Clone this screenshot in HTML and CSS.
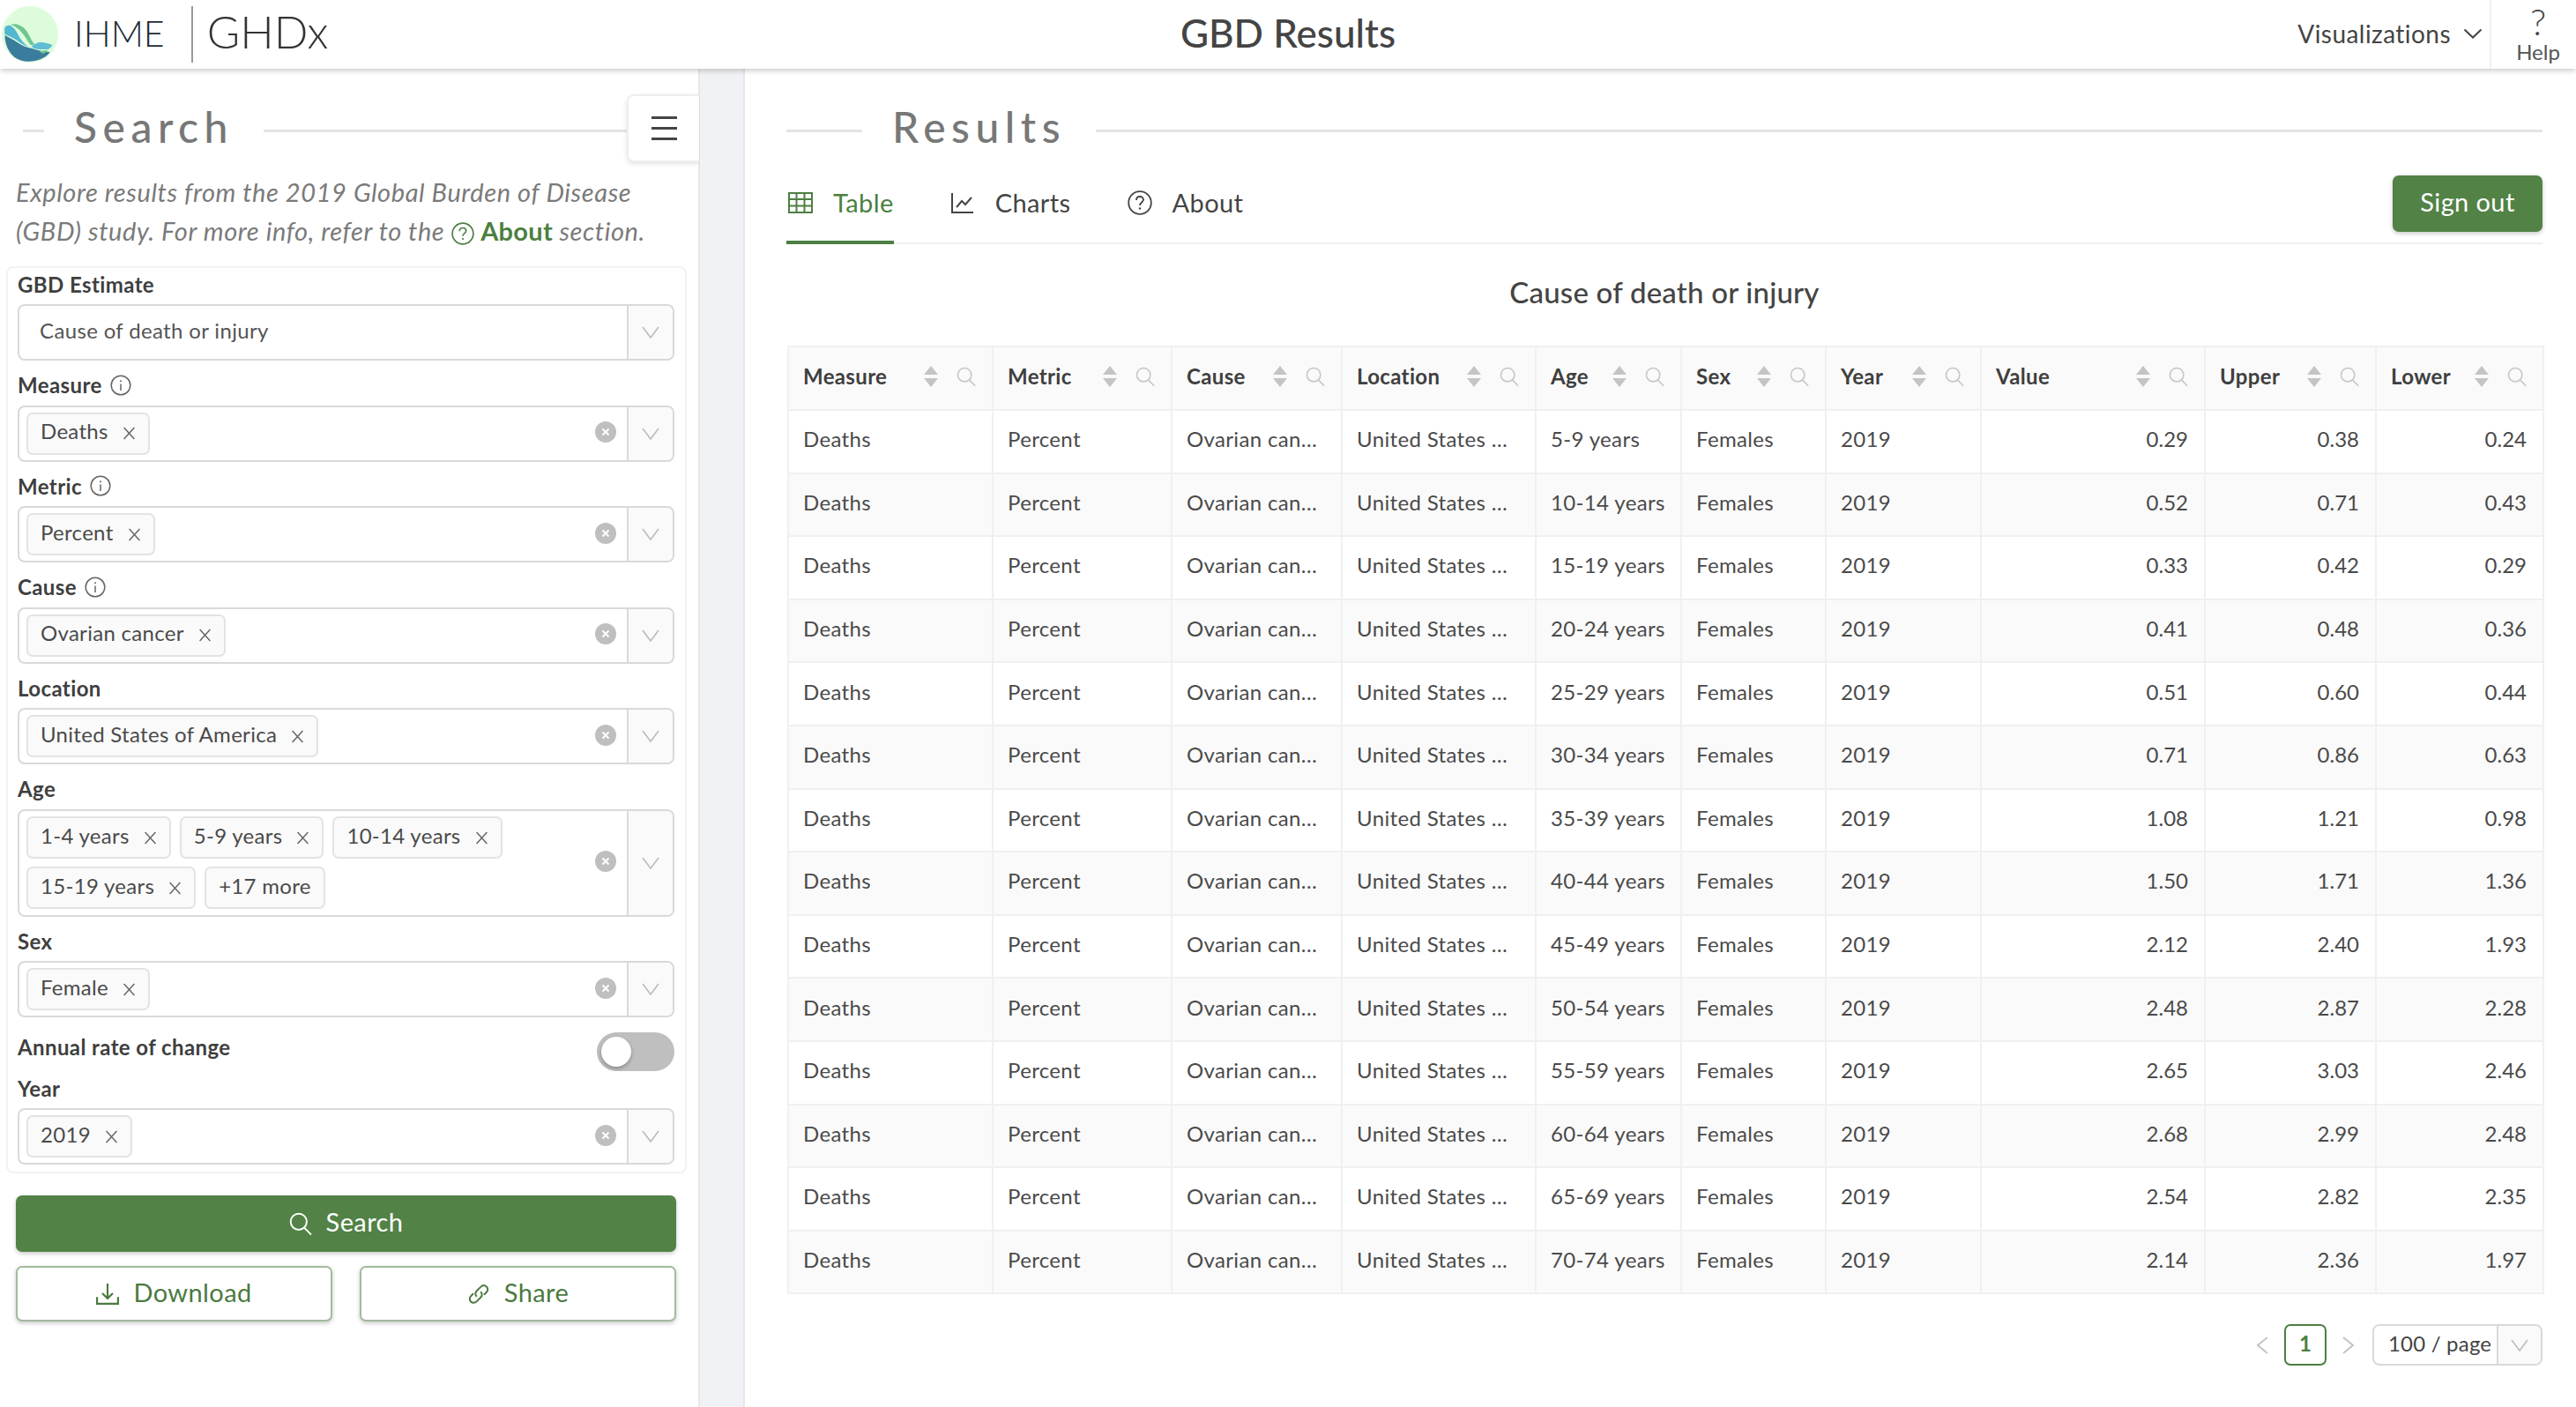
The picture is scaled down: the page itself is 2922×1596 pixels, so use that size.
FILE: index.html
```html
<!DOCTYPE html>
<html lang="en">
<head>
    <meta charset="UTF-8">
    <title>GBD Results</title>
    <link rel="stylesheet" href="styles.css">
</head>
<body>
    <svg class="sprites" width="0" height="0">
        <symbol id="i-chevron" viewBox="0 0 20 14"><path d="M1 1l9 12 9-12" fill="none" stroke="currentColor" stroke-width="1.6"/></symbol>
        <symbol id="i-x" viewBox="0 0 14 14"><path d="M1.500 1l11 12M12.500 1l-11 12" fill="none" stroke="currentColor" stroke-width="1.400"/></symbol>
        <symbol id="i-clear" viewBox="0 0 24 24"><circle cx="12" cy="12" r="12" fill="#bfbfbf"/><path d="M8.500 8.500l7 7M15.500 8.500l-7 7" fill="none" stroke="#fff" stroke-width="2"/></symbol>
        <symbol id="i-info" viewBox="0 0 24 24"><circle cx="12" cy="12" r="10.800" fill="none" stroke="currentColor" stroke-width="1.500"/><path d="M12 10.500v7.500" stroke="currentColor" stroke-width="1.500"/><circle cx="12" cy="7.300" r="1" fill="currentColor"/></symbol>
        <symbol id="i-help" viewBox="0 0 28 28"><circle cx="14" cy="14" r="12.800" fill="none" stroke="currentColor" stroke-width="1.800"/><path d="M10 11c0-2.500 1.800-4 4-4s4 1.500 4 3.600c0 2.900-4 3-4 6.400" fill="none" stroke="currentColor" stroke-width="1.800"/><circle cx="14" cy="20.500" r="1.200" fill="currentColor"/></symbol>
        <symbol id="i-search" viewBox="0 0 24 24"><circle cx="10" cy="10" r="8.400" fill="none" stroke="currentColor" stroke-width="1.800"/><path d="M16 16.500l7 7" fill="none" stroke="currentColor" stroke-width="1.800"/></symbol>
        <symbol id="i-sort" viewBox="0 0 16 24"><path d="M8 0l8 10H0zM0 14h16l-8 10z" fill="currentColor"/></symbol>
    </svg>

    <header class="topbar">
        <div class="brand">
            <svg class="logo" viewBox="2.500 6 64 64">
                <circle cx="34.500" cy="38" r="32" fill="#dcfcdc"/>
                <path d="M6 39c4 2 10 5 14 8 6 4 11 6 17 7 6 2 14 4 20 4-2 4-7 7-13 9-10 3-20 2-27-3-7-6-11-15-11-25z" fill="#3a7c9b"/>
                <path d="M6 30c2-2 4-2.500 6-2 5 2 8 8 11 14 3 4 6 8 10 10-5-1-9-4-13-7-4-3-9-5-14-7-.5-3-.5-5 0-8z" fill="#55b6d0"/>
                <path d="M12 27c5-1 8-1 11 1 5 2 8 6 10 10 2 4 4 8 7 12h-5c-3-4-5-8-8-12-4-5-8-9-15-11z" fill="#6fc78e"/>
                <path d="M36 52c3-3 6-4 9-5 5-.5 11 1 15 3-1 2-3 4-5 5h-10c-3 0-6-1-9-3z" fill="#60bdd4"/>
                <path d="M45 57l9-1 1 1-6 3z" fill="#6fc78e"/>
            </svg>
            <span class="brand-ihme">IHME</span>
            <span class="brand-ghdx">GHDx</span>
        </div>
        <div class="app-title">GBD Results</div>
        <nav class="topnav">
            <span class="viz-menu">Visualizations <svg class="viz-chevron" viewBox="0 0 22 12"><path d="M1.500 1.500L11 10.500l9.500-9" fill="none" stroke="currentColor" stroke-width="2"/></svg></span>
            <div class="help"><span class="help-mark">?</span><span class="help-text">Help</span></div>
        </nav>
    </header>

    <div class="page">
        <aside class="sidebar">
            <div class="panel-head sidebar-head">
                <span class="rule rule-short"></span>
                <h2>Search</h2>
                <span class="rule"></span>
                <button class="menu-btn"><span></span><span></span><span></span></button>
            </div>
            <p class="intro">
                <span class="intro-line">Explore results from the 2019 Global Burden of Disease</span>
                <span class="intro-line">(GBD) study. For more info, refer to the <svg class="intro-icon"><use href="#i-help"/></svg> <a>About</a> section.</span>
            </p>

            <div class="filters">
                <label class="field-label">GBD Estimate</label>
                <div class="select"><div class="select-value"><span class="plain-value">Cause of death or injury</span></div><div class="select-arrow"><svg><use href="#i-chevron"/></svg></div></div>

                <label class="field-label">Measure <svg class="info"><use href="#i-info"/></svg></label>
                <div class="select"><div class="select-value"><span class="tag">Deaths<svg><use href="#i-x"/></svg></span></div><svg class="clear"><use href="#i-clear"/></svg><div class="select-arrow"><svg><use href="#i-chevron"/></svg></div></div>

                <label class="field-label">Metric <svg class="info"><use href="#i-info"/></svg></label>
                <div class="select"><div class="select-value"><span class="tag">Percent<svg><use href="#i-x"/></svg></span></div><svg class="clear"><use href="#i-clear"/></svg><div class="select-arrow"><svg><use href="#i-chevron"/></svg></div></div>

                <label class="field-label">Cause <svg class="info"><use href="#i-info"/></svg></label>
                <div class="select"><div class="select-value"><span class="tag">Ovarian cancer<svg><use href="#i-x"/></svg></span></div><svg class="clear"><use href="#i-clear"/></svg><div class="select-arrow"><svg><use href="#i-chevron"/></svg></div></div>

                <label class="field-label">Location</label>
                <div class="select"><div class="select-value"><span class="tag">United States of America<svg><use href="#i-x"/></svg></span></div><svg class="clear"><use href="#i-clear"/></svg><div class="select-arrow"><svg><use href="#i-chevron"/></svg></div></div>

                <label class="field-label">Age</label>
                <div class="select select-tall"><div class="select-value"><span class="tag">1-4 years<svg><use href="#i-x"/></svg></span><span class="tag">5-9 years<svg><use href="#i-x"/></svg></span><span class="tag">10-14 years<svg><use href="#i-x"/></svg></span><span class="tag">15-19 years<svg><use href="#i-x"/></svg></span><span class="tag">+17 more</span></div><svg class="clear"><use href="#i-clear"/></svg><div class="select-arrow"><svg><use href="#i-chevron"/></svg></div></div>

                <label class="field-label">Sex</label>
                <div class="select"><div class="select-value"><span class="tag">Female<svg><use href="#i-x"/></svg></span></div><svg class="clear"><use href="#i-clear"/></svg><div class="select-arrow"><svg><use href="#i-chevron"/></svg></div></div>

                <div class="switch-row">
                    <label class="field-label">Annual rate of change</label>
                    <span class="switch"><span class="switch-knob"></span></span>
                </div>

                <label class="field-label">Year</label>
                <div class="select select-last"><div class="select-value"><span class="tag">2019<svg><use href="#i-x"/></svg></span></div><svg class="clear"><use href="#i-clear"/></svg><div class="select-arrow"><svg><use href="#i-chevron"/></svg></div></div>
            </div>

            <button class="btn btn-primary btn-search"><svg class="btn-icon"><use href="#i-search"/></svg><span>Search</span></button>
            <div class="btn-row">
                <button class="btn btn-outline"><svg class="btn-icon" viewBox="0 0 24 24"><path d="M12 1v15M6.500 11l5.500 5.500 5.500-5.500M1 15v7h22v-7" fill="none" stroke="currentColor" stroke-width="2"/></svg><span>Download</span></button>
                <button class="btn btn-outline"><svg class="btn-icon" viewBox="0 0 24 24"><path d="M10 14.500c-2-2-1.800-4.200 0-6l4-4c2-2 4.500-2 6.200-.3 1.800 1.800 1.600 4.300-.2 6l-2.500 2.500M14 9.500c2 2 1.800 4.200 0 6l-4 4c-2 2-4.500 2-6.200.3-1.800-1.800-1.600-4.300.2-6l2.500-2.500" fill="none" stroke="currentColor" stroke-width="1.800"/></svg><span>Share</span></button>
            </div>
        </aside>

        <div class="gutter"></div>

        <main class="results">
            <div class="panel-head">
                <span class="rule rule-mid"></span>
                <h2>Results</h2>
                <span class="rule"></span>
            </div>

            <div class="tabs">
                <a class="tab tab-active"><svg class="tab-icon" viewBox="0 0 28 28"><path d="M1 3h26v22H1zM1 10h26M1 17.500h26M9.500 3v22M18.500 3v22" fill="none" stroke="currentColor" stroke-width="2"/></svg>Table</a>
                <a class="tab"><svg class="tab-icon" viewBox="0 0 28 28"><path d="M2 3v22h24M7 19l6-7 4 4 7-8" fill="none" stroke="currentColor" stroke-width="2"/></svg>Charts</a>
                <a class="tab"><svg class="tab-icon"><use href="#i-help"/></svg>About</a>
                <button class="btn btn-primary btn-signout"><span>Sign out</span></button>
            </div>

            <h3 class="table-title">Cause of death or injury</h3>

            <table class="data-table">
                <colgroup>
                    <col class="c-measure"><col class="c-metric"><col class="c-cause"><col class="c-location"><col class="c-age"><col class="c-sex"><col class="c-year"><col class="c-value"><col class="c-upper"><col class="c-lower">
                </colgroup>
                <thead>
                    <tr>
                        <th><div class="th-in"><span>Measure</span><svg class="sort"><use href="#i-sort"/></svg><svg class="th-search"><use href="#i-search"/></svg></div></th>
                        <th><div class="th-in"><span>Metric</span><svg class="sort"><use href="#i-sort"/></svg><svg class="th-search"><use href="#i-search"/></svg></div></th>
                        <th><div class="th-in"><span>Cause</span><svg class="sort"><use href="#i-sort"/></svg><svg class="th-search"><use href="#i-search"/></svg></div></th>
                        <th><div class="th-in"><span>Location</span><svg class="sort"><use href="#i-sort"/></svg><svg class="th-search"><use href="#i-search"/></svg></div></th>
                        <th><div class="th-in"><span>Age</span><svg class="sort"><use href="#i-sort"/></svg><svg class="th-search"><use href="#i-search"/></svg></div></th>
                        <th><div class="th-in"><span>Sex</span><svg class="sort"><use href="#i-sort"/></svg><svg class="th-search"><use href="#i-search"/></svg></div></th>
                        <th><div class="th-in"><span>Year</span><svg class="sort"><use href="#i-sort"/></svg><svg class="th-search"><use href="#i-search"/></svg></div></th>
                        <th><div class="th-in"><span>Value</span><svg class="sort"><use href="#i-sort"/></svg><svg class="th-search"><use href="#i-search"/></svg></div></th>
                        <th><div class="th-in"><span>Upper</span><svg class="sort"><use href="#i-sort"/></svg><svg class="th-search"><use href="#i-search"/></svg></div></th>
                        <th><div class="th-in"><span>Lower</span><svg class="sort"><use href="#i-sort"/></svg><svg class="th-search"><use href="#i-search"/></svg></div></th>
                    </tr>
                </thead>
                <tbody>
                    <tr><td>Deaths</td><td>Percent</td><td>Ovarian can…</td><td>United States …</td><td>5-9 years</td><td>Females</td><td>2019</td><td class="num">0.29</td><td class="num">0.38</td><td class="num">0.24</td></tr>
                    <tr><td>Deaths</td><td>Percent</td><td>Ovarian can…</td><td>United States …</td><td>10-14 years</td><td>Females</td><td>2019</td><td class="num">0.52</td><td class="num">0.71</td><td class="num">0.43</td></tr>
                    <tr><td>Deaths</td><td>Percent</td><td>Ovarian can…</td><td>United States …</td><td>15-19 years</td><td>Females</td><td>2019</td><td class="num">0.33</td><td class="num">0.42</td><td class="num">0.29</td></tr>
                    <tr><td>Deaths</td><td>Percent</td><td>Ovarian can…</td><td>United States …</td><td>20-24 years</td><td>Females</td><td>2019</td><td class="num">0.41</td><td class="num">0.48</td><td class="num">0.36</td></tr>
                    <tr><td>Deaths</td><td>Percent</td><td>Ovarian can…</td><td>United States …</td><td>25-29 years</td><td>Females</td><td>2019</td><td class="num">0.51</td><td class="num">0.60</td><td class="num">0.44</td></tr>
                    <tr><td>Deaths</td><td>Percent</td><td>Ovarian can…</td><td>United States …</td><td>30-34 years</td><td>Females</td><td>2019</td><td class="num">0.71</td><td class="num">0.86</td><td class="num">0.63</td></tr>
                    <tr><td>Deaths</td><td>Percent</td><td>Ovarian can…</td><td>United States …</td><td>35-39 years</td><td>Females</td><td>2019</td><td class="num">1.08</td><td class="num">1.21</td><td class="num">0.98</td></tr>
                    <tr><td>Deaths</td><td>Percent</td><td>Ovarian can…</td><td>United States …</td><td>40-44 years</td><td>Females</td><td>2019</td><td class="num">1.50</td><td class="num">1.71</td><td class="num">1.36</td></tr>
                    <tr><td>Deaths</td><td>Percent</td><td>Ovarian can…</td><td>United States …</td><td>45-49 years</td><td>Females</td><td>2019</td><td class="num">2.12</td><td class="num">2.40</td><td class="num">1.93</td></tr>
                    <tr><td>Deaths</td><td>Percent</td><td>Ovarian can…</td><td>United States …</td><td>50-54 years</td><td>Females</td><td>2019</td><td class="num">2.48</td><td class="num">2.87</td><td class="num">2.28</td></tr>
                    <tr><td>Deaths</td><td>Percent</td><td>Ovarian can…</td><td>United States …</td><td>55-59 years</td><td>Females</td><td>2019</td><td class="num">2.65</td><td class="num">3.03</td><td class="num">2.46</td></tr>
                    <tr><td>Deaths</td><td>Percent</td><td>Ovarian can…</td><td>United States …</td><td>60-64 years</td><td>Females</td><td>2019</td><td class="num">2.68</td><td class="num">2.99</td><td class="num">2.48</td></tr>
                    <tr><td>Deaths</td><td>Percent</td><td>Ovarian can…</td><td>United States …</td><td>65-69 years</td><td>Females</td><td>2019</td><td class="num">2.54</td><td class="num">2.82</td><td class="num">2.35</td></tr>
                    <tr><td>Deaths</td><td>Percent</td><td>Ovarian can…</td><td>United States …</td><td>70-74 years</td><td>Females</td><td>2019</td><td class="num">2.14</td><td class="num">2.36</td><td class="num">1.97</td></tr>
                </tbody>
            </table>

            <div class="pager">
                <svg class="pager-arrow" viewBox="0 0 14 20"><path d="M13 1L2 10l11 9" fill="none" stroke="currentColor" stroke-width="2"/></svg>
                <span class="pager-current">1</span>
                <svg class="pager-arrow" viewBox="0 0 14 20"><path d="M1 1l11 9-11 9" fill="none" stroke="currentColor" stroke-width="2"/></svg>
                <div class="page-size"><span class="page-size-text">100 / page</span><div class="select-arrow"><svg><use href="#i-chevron"/></svg></div></div>
            </div>
        </main>
    </div>
</body>
</html>
```

FILE: styles.css
```css
* {
    margin: 0;
    padding: 0;
    box-sizing: border-box;
}

html, body {
    height: 100%;
}

body {
    font-family: "Lato", "Open Sans", sans-serif;
    font-size: 24px;
    color: #444;
    background: #fff;
    overflow: hidden;
}

.sprites {
    position: absolute;
}

button {
    font-family: inherit;
    cursor: pointer;
}

/* top bar */
.topbar {
    position: relative;
    z-index: 2;
    height: 78px;
    display: grid;
    grid-template-columns: 1fr auto 1fr;
    align-items: center;
    background: #fff;
    box-shadow: 0 2px 6px rgba(0, 0, 0, 0.22);
}

.brand {
    display: flex;
    align-items: center;
    height: 78px;
    padding-left: 2px;
}

.logo {
    width: 64px;
    height: 64px;
}

.brand-ihme {
    margin-left: 18px;
    padding-bottom: 3px;
    font-size: 41px;
    font-weight: 300;
    color: #1d2b33;
}

.brand-ghdx {
    margin-left: 30px;
    padding-left: 16px;
    border-left: 2px solid #999;
    height: 64px;
    line-height: 58px;
    font-size: 51px;
    font-weight: 300;
    color: #333;
}

.app-title {
    padding-bottom: 4px;
    font-size: 44px;
    font-weight: 500;
    color: #444;
}

.topnav {
    display: flex;
    justify-content: flex-end;
    align-items: center;
    height: 78px;
}

.viz-menu {
    display: flex;
    align-items: center;
    gap: 14px;
    padding-bottom: 3px;
    font-size: 28px;
    letter-spacing: 0.45px;
    color: #444;
    margin-right: 8px;
}

.viz-chevron {
    width: 22px;
    height: 12px;
}

.help {
    width: 98px;
    height: 78px;
    padding-left: 10px;
    border-left: 2px solid #f0f0f0;
    display: flex;
    flex-direction: column;
    align-items: center;
    line-height: 1;
}

.help-mark {
    font-size: 42px;
    margin-top: 3px;
    font-weight: 300;
}

.help-text {
    font-size: 24px;
    margin-top: 2px;
    color: #555;
}

/* layout */
.page {
    display: flex;
    height: calc(100% - 78px);
}

.sidebar {
    width: 794px;
    flex: none;
    padding: 0 25px 0 18px;
    border-right: 2px solid #e8e8e8;
}

.gutter {
    width: 51px;
    flex: none;
    background: #f0f2f5;
    border-right: 2px solid #e8e8e8;
}

.results {
    flex: 1;
    min-width: 0;
    padding: 0 38px 0 47px;
}

.panel-head {
    display: flex;
    align-items: center;
    margin-top: 29px;
    height: 77px;
}

.panel-head h2 {
    padding-bottom: 4px;
    font-size: 48px;
    font-weight: 500;
    letter-spacing: 6.5px;
    color: #777;
    margin: 0 34px;
}

.rule {
    flex: 1;
    height: 3px;
    margin-top: 5px;
    background: #e4e4e4;
}

.rule-short {
    flex: none;
    width: 24px;
}

.rule-mid {
    flex: none;
    width: 86px;
}

.sidebar-head {
    margin-left: 8px;
    margin-right: -26px;
}

.menu-btn {
    flex: none;
    width: 82px;
    height: 77px;
    display: flex;
    flex-direction: column;
    justify-content: center;
    align-items: center;
    gap: 9px;
    background: #fff;
    border: 2px solid #eee;
    border-right: 0;
    border-radius: 8px 0 0 8px;
    box-shadow: 0 2px 5px rgba(0, 0, 0, 0.12);
}

.menu-btn span {
    width: 29px;
    height: 3px;
    background: #444;
}

.intro {
    margin-top: 12px;
    font-size: 29px;
    line-height: 44px;
    letter-spacing: 0.6px;
    font-style: italic;
    color: #7a7a7a;
}

.intro-line {
    display: block;
    white-space: nowrap;
}

.intro-icon {
    width: 26px;
    height: 26px;
    color: #4c7f41;
    vertical-align: -5px;
}

.intro a {
    font-style: normal;
    font-weight: 700;
    letter-spacing: 0.3px;
    color: #4c7f41;
}

/* filter card */
.filters {
    margin: 18px -12px 0 -11px;
    padding: 3px 12px 8px 11px;
    border: 2px solid #f2f2f2;
    border-radius: 8px;
}

.field-label {
    display: flex;
    align-items: center;
    gap: 9px;
    height: 38px;
    padding-bottom: 8px;
    font-weight: 700;
    letter-spacing: 0.4px;
    color: #3f3f3f;
}

.info {
    width: 24px;
    height: 24px;
    color: #666;
}

.select {
    display: flex;
    align-items: center;
    height: 64px;
    margin-bottom: 12.5px;
    background: #fff;
    border: 2px solid #d9d9d9;
    border-radius: 8px;
}

.select-tall {
    height: 122px;
}

.select-last {
    margin-bottom: 0;
}

.select-value {
    flex: 1;
    display: flex;
    flex-wrap: wrap;
    gap: 9px 10px;
    padding-left: 8px;
}

.plain-value {
    padding: 0 0 5px 15px;
    letter-spacing: 0.35px;
    color: #555;
}

.tag {
    display: inline-flex;
    align-items: center;
    gap: 16px;
    height: 48px;
    padding: 0 14px 6px;
    background: #fafafa;
    border: 2px solid #e3e3e3;
    border-radius: 7px;
    letter-spacing: 0.3px;
    color: #4a4a4a;
}

.tag svg {
    width: 15px;
    height: 15px;
    margin-top: 6px;
    color: #666;
}

.clear {
    flex: none;
    width: 24px;
    height: 24px;
    margin: 0 12px 3px 0;
}

.select-arrow {
    flex: none;
    width: 52px;
    align-self: stretch;
    display: flex;
    align-items: center;
    justify-content: center;
    background: #fafafa;
    border-left: 2px solid #d9d9d9;
    border-radius: 0 7px 7px 0;
    color: #bbb;
}

.select-arrow svg {
    width: 20px;
    height: 14px;
}

.switch-row {
    display: flex;
    align-items: center;
    justify-content: space-between;
    height: 44px;
    margin: 17px 0 4px;
}

.switch-row .field-label {
    padding-bottom: 12px;
}

.switch {
    width: 88px;
    height: 44px;
    padding: 5px;
    background: #bfbfbf;
    border-radius: 22px;
}

.switch-knob {
    display: block;
    width: 34px;
    height: 34px;
    background: #fff;
    border-radius: 50%;
    box-shadow: 0 2px 4px rgba(0, 0, 0, 0.3);
}

/* buttons */
.btn {
    display: flex;
    align-items: center;
    justify-content: center;
    gap: 16px;
    font-size: 29px;
    letter-spacing: 0.4px;
    border-radius: 7px;
    box-shadow: 0 2px 5px rgba(0, 0, 0, 0.22);
}

.btn span {
    padding-bottom: 5px;
}

.btn-icon {
    width: 26px;
    height: 26px;
}

.btn-primary {
    color: #fff;
    background: #528246;
    border: 0;
}

.btn-outline {
    flex: 1;
    height: 63px;
    color: #4b7a3f;
    background: #fff;
    border: 2px solid #a3bb9c;
}

.btn-search {
    width: 100%;
    height: 64px;
    margin-top: 25px;
}

.btn-row {
    display: flex;
    gap: 31px;
    margin-top: 16px;
}

/* tabs */
.tabs {
    display: flex;
    height: 78px;
    margin-top: 15px;
    border-bottom: 2px solid #f0f0f0;
}

.tab {
    display: flex;
    align-items: flex-start;
    gap: 23px;
    height: 78px;
    margin-right: 64px;
    font-size: 29px;
    line-height: 62px;
    letter-spacing: 0.4px;
    color: #444;
}

.tab:first-child {
    padding-left: 2px;
}

.tab-icon {
    width: 28px;
    height: 28px;
    margin-top: 17px;
    flex: none;
}

.tab-active {
    color: #4c7f41;
    border-bottom: 4px solid #4c7f41;
}

.btn-signout {
    margin-left: auto;
    width: 170px;
    height: 64px;
}

.table-title {
    margin-top: 34px;
    font-size: 33px;
    line-height: 40px;
    letter-spacing: 0.2px;
    font-weight: 500;
    text-align: center;
    color: #444;
}

/* table */
.data-table {
    width: 1991px;
    margin: 41px 0 0 1px;
    table-layout: fixed;
    border-collapse: collapse;
    letter-spacing: 0.35px;
    color: #4a4a4a;
}

.c-measure { width: 232px; }
.c-metric { width: 203px; }
.c-cause { width: 193px; }
.c-location { width: 220px; }
.c-age { width: 165px; }
.c-sex { width: 164px; }
.c-year { width: 176px; }
.c-value { width: 254px; }
.c-upper { width: 194px; }
.c-lower { width: 190px; }

.data-table th,
.data-table td {
    border: 2px solid #f0f0f0;
    padding: 0 18px 6px 16px;
    white-space: nowrap;
    overflow: hidden;
}

.data-table th {
    height: 72px;
    padding-right: 18px;
    background: #fafafa;
    text-align: left;
    color: #3f3f3f;
    font-weight: 700;
}

.data-table td {
    height: 71.6px;
}

.data-table tbody tr:nth-child(even) td {
    background: #fafafa;
}

.data-table .num {
    text-align: right;
    letter-spacing: 0;
}

.th-in {
    display: flex;
    align-items: center;
}

.th-in span {
    flex: 1;
}

.sort {
    width: 16px;
    height: 24px;
    margin: 2px 21px 0 0;
    color: #c4c4c4;
}

.th-search {
    width: 22px;
    height: 24px;
    margin-top: 2px;
    color: #c8c8c8;
}

/* pager */
.pager {
    display: flex;
    justify-content: flex-end;
    align-items: center;
    gap: 18px;
    margin-top: 34px;
    height: 47px;
}

.pager-arrow {
    width: 14px;
    height: 20px;
    color: #c4c4c4;
}

.pager-current {
    width: 48px;
    height: 47px;
    line-height: 40px;
    text-align: center;
    font-weight: 700;
    color: #4c7f41;
    border: 2px solid #4c7f41;
    border-radius: 7px;
}

.page-size {
    display: flex;
    width: 193px;
    height: 47px;
    margin-left: 2px;
    border: 2px solid #d9d9d9;
    border-radius: 8px;
}

.page-size-text {
    flex: 1;
    padding-left: 16px;
    line-height: 40px;
    letter-spacing: 0.2px;
}

.page-size .select-arrow {
    width: 50px;
}
```
